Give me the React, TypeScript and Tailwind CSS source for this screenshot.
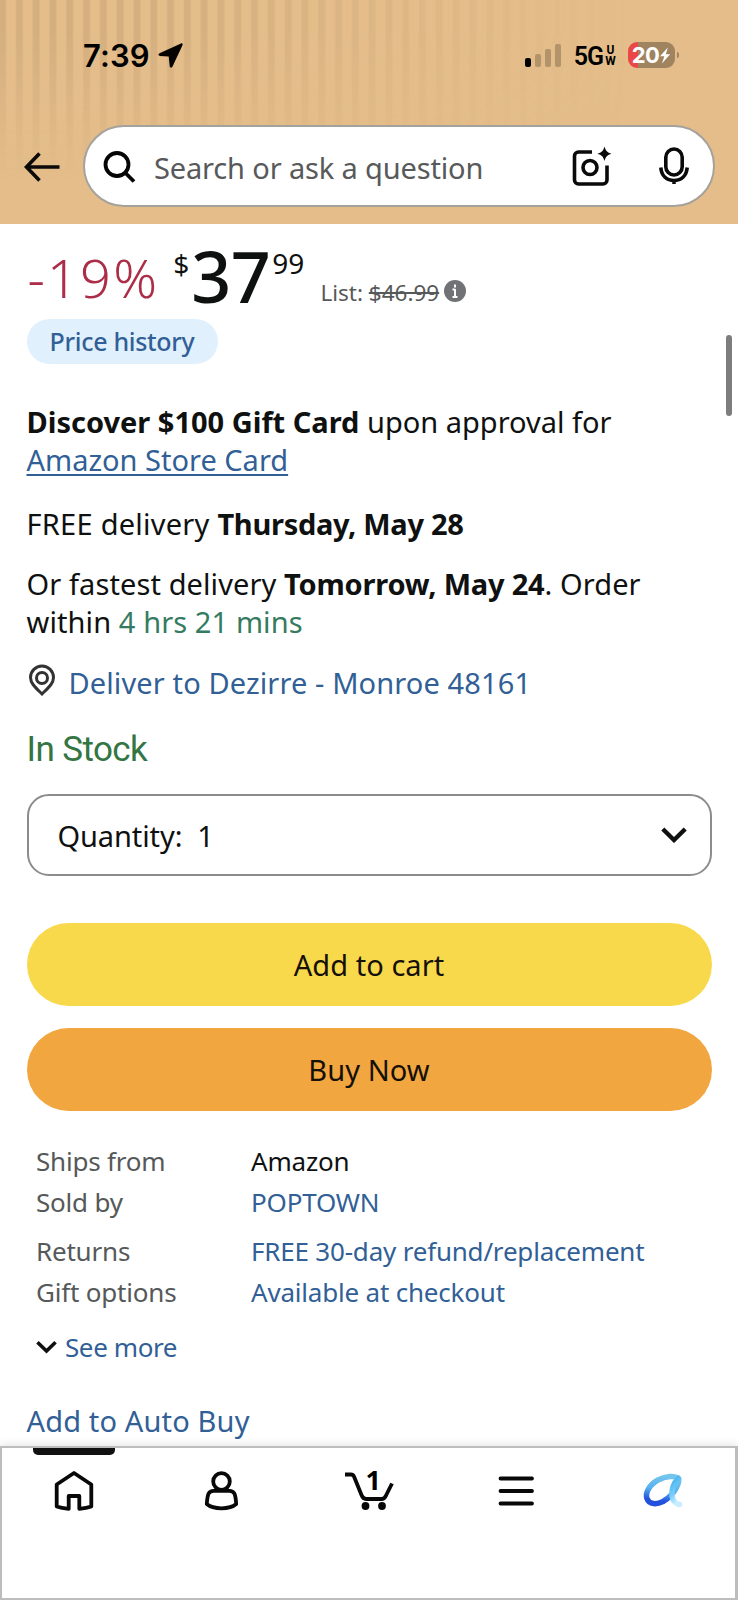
import type { ReactNode } from "react";

const details = [
  { label: "Ships from", value: "Amazon", link: false, gap: "" },
  { label: "Sold by", value: "POPTOWN", link: true, gap: "mt-[5px]" },
  { label: "Returns", value: "FREE 30-day refund/replacement", link: true, gap: "mt-[13px]" },
  { label: "Gift options", value: "Available at checkout", link: true, gap: "mt-[5px]" },
];

function StatusBar() {
  return (
    <div className="flex h-[110px] items-center pl-[83px] pr-[59px] font-['Inter',sans-serif] text-black">
      <span className="text-[31px] font-semibold leading-none tracking-[0.1px]">7:39</span>
      <svg className="ml-[8px]" width="25" height="25" viewBox="0 0 25 25">
        <path d="M23 .5 1.500 10.200C-.1 11 .2 12.700 1.800 12.900L10.700 13.500 11.700 23.300c.2 1.700 2 2 2.800.3L24.500 2.200C25 1 24.300 0 23 .5Z" fill="#050200" />
      </svg>
      <div className="ml-auto flex items-end gap-1">
        <span className="h-[9px] w-1.5 rounded-[2px] bg-black" />
        <span className="h-[13px] w-1.5 rounded-[2px] bg-[#b3936a]" />
        <span className="h-[18px] w-1.5 rounded-[2px] bg-[#b3936a]" />
        <span className="h-[23px] w-1.5 rounded-[2px] bg-[#b3936a]" />
      </div>
      <span className="ml-[13px] mt-[2px] font-['Roboto',sans-serif] text-[25px] font-semibold leading-none tracking-[-1px]">5G</span>
      <span className="ml-[2px] mt-[2px] flex w-[11px] flex-col items-center font-['Roboto',sans-serif] text-[12px] font-bold leading-[11px]">
        <span>U</span>
        <span>W</span>
      </span>
      <div className="ml-3 flex h-[26px] w-[47px] items-center justify-center rounded-[9px] bg-linear-to-r from-[#ea4747] from-[22%] to-[#a0835f] to-[22%] text-white">
        <span className="text-[22px] font-bold leading-none tracking-[-0.5px]">20</span>
        <svg width="12" height="17" viewBox="0 0 12 17">
          <path d="M8.800.5 1 9.300h4.300L3 16.500l8.200-9.300H6.900Z" fill="#fff" />
        </svg>
      </div>
      <span className="ml-[2px] h-[6px] w-[2px] rounded-r bg-[#a0835f]" />
    </div>
  );
}

function SearchBar() {
  return (
    <div className="mt-[15px] flex items-center pl-6 pr-[23px]">
      <svg className="mt-[2px]" width="36" height="30" viewBox="0 0 36 30" fill="none" stroke="#0b0a08" strokeWidth="3.600">
        <path d="M35.500 15H3M15.500 1.500 2.500 15l13 13.500" />
      </svg>
      <div className="ml-[23px] flex h-[82px] flex-1 items-center rounded-full border-2 border-[#a5a29c] bg-white pl-[17px] pr-[24px]">
        <svg className="mt-px" width="34" height="34" viewBox="0 0 34 34" fill="none" stroke="#050505" strokeWidth="3.800">
          <circle cx="15" cy="14.500" r="11.500" />
          <path d="m23 22.500 9 9" />
        </svg>
        <span className="ml-[18px] mt-[4px] text-[29px] leading-9 tracking-[-0.15px] text-[#58595a]">Search or ask a question</span>
        <svg className="ml-auto" width="40" height="42" viewBox="0 0 40 42" fill="none" stroke="#0a0a0a" strokeWidth="3.600">
          <path d="M20 7H6.500A4 4 0 0 0 2.500 11v24a4 4 0 0 0 4 4H31a4 4 0 0 0 4-4V20.500" />
          <circle cx="18" cy="22.500" r="7" />
          <path d="M32.500 1.500c1.300 4.500 2.700 5.900 7 7.300-4.300 1.400-5.700 2.800-7 7.200-1.300-4.400-2.700-5.800-7.200-7.200 4.500-1.400 5.900-2.800 7.200-7.300Z" fill="#0a0a0a" stroke="none" />
        </svg>
        <svg className="ml-[47px]" width="30" height="38" viewBox="0 0 30 38" fill="none" stroke="#0a0a0a" strokeWidth="3.600">
          <rect x="6.800" y="2" width="16.400" height="26" rx="8.200" />
          <path d="M1.800 20.500C2.500 29 8 33.500 15 33.500S27.500 29 28.200 20.500M15 33v4" />
        </svg>
      </div>
    </div>
  );
}

function PriceRow() {
  return (
    <div className="flex h-[95px] items-start text-[#0f1111]">
      <span className="ml-px mt-[17px] text-[54px] font-light leading-[72px] tracking-[2.200px] text-[#ab2d47]">-19%</span>
      <span className="ml-[14px] mt-[22px] text-[28px] leading-9">$</span>
      <span className="ml-[2px] mt-[4px] text-[70px] font-medium leading-[96px] tracking-[-0.5px]">37</span>
      <span className="ml-[2px] mt-[21px] text-[28px] leading-9">99</span>
      <span className="ml-4 mt-[53px] text-[22.500px] leading-[32px] text-[#565959]">
        List: <span className="line-through">$46.99</span>
      </span>
      <svg className="ml-[5px] mt-[56px]" width="22" height="22" viewBox="0 0 22 22">
        <circle cx="11" cy="11" r="11" fill="#717275" />
        <path d="M11 4.500v3M11 9v8M8.500 9.500H11M8.500 17h5" stroke="#fff" strokeWidth="2" />
      </svg>
    </div>
  );
}

function PillButton({ className, children }: { className: string; children: ReactNode }) {
  return (
    <button className={`flex h-[83px] w-full items-center justify-center rounded-full text-[29px] leading-none tracking-[0.050px] text-[#151008] ${className}`}>
      {children}
    </button>
  );
}

function Chevron({ width, height }: { width: number; height: number }) {
  return (
    <svg width={width} height={height} viewBox="0 0 26 16" fill="none" stroke="#0f1111" strokeWidth="4.400">
      <path d="m1.800 2 11.200 11L24.200 2" />
    </svg>
  );
}

function BottomNav() {
  return (
    <nav className="h-[154px] border-2 border-r-[3px] border-[#bdbdbf] bg-white shadow-[0_-2px_8px_rgba(0,0,0,0.1)]">
      <div className="ml-[31px] h-[7px] w-[82px] rounded-b-[5px] bg-[#111]" />
      <div className="-mr-[2px] -ml-[2px] mt-[15px] grid grid-cols-5 justify-items-center">
        <svg width="40" height="42" viewBox="0 0 40 42" fill="none" stroke="#080808" strokeWidth="3.800" strokeLinejoin="round">
          <path d="M20 3 2.700 14.500v22c4 1.500 8 2 12 2.300V26h10.600v12.800c4-.3 8-.8 12-2.300v-22Z" />
        </svg>
        <svg width="36" height="42" viewBox="0 0 36 42" fill="none" stroke="#080808" strokeWidth="3.800" strokeLinejoin="round">
          <circle cx="18.500" cy="11.500" r="8.300" />
          <path d="M10.500 20.800h16c4.500 0 6 2.500 6.700 13.200-6.500 5.700-22.900 5.700-29.400 0 .7-10.700 2.200-13.200 6.700-13.200Z" />
        </svg>
        <div className="relative h-[42px] w-[48px]">
          <svg width="50" height="42" viewBox="0 0 50 42" fill="none" stroke="#080808" strokeWidth="3.800" strokeLinejoin="round">
            <path d="M1 4.500h6c1.500 0 2.300.5 3 2l7.500 18.500c1.200 3 2 4 4.500 4h15.500c2.500 0 3.500-1 4.500-3.500L48 13.500" />
            <circle cx="21.500" cy="36" r="3.900" fill="#080808" stroke="none" />
            <circle cx="38" cy="36" r="3.900" fill="#080808" stroke="none" />
          </svg>
          <span className="absolute left-[21px] top-[-4px] text-[27px] font-bold leading-[27px] text-black">1</span>
        </div>
        <svg width="38" height="42" viewBox="0 0 38 42" stroke="#080808" strokeWidth="3.800" strokeLinecap="round">
          <path d="M3.500 8.500h31.500M3.500 21h31.500M3.500 33.500h31.500" />
        </svg>
        <svg width="42" height="42" viewBox="0 0 42 42" fill="none" strokeWidth="5.500" strokeLinecap="round" strokeLinejoin="round">
          <defs>
            <linearGradient id="loop" x1="0.600" y1="0" x2="0.400" y2="1">
              <stop offset="0" stopColor="#74c5ee" />
              <stop offset="0.500" stopColor="#58b2f0" />
              <stop offset="0.900" stopColor="#2350dd" />
            </linearGradient>
            <linearGradient id="tail" x1="0" y1="0" x2="0.300" y2="1">
              <stop offset="0" stopColor="#43b0ee" />
              <stop offset="0.600" stopColor="#7ad0fa" />
              <stop offset="1" stopColor="#c8edff" />
            </linearGradient>
          </defs>
          <path d="M36.500 8.500C33 5.500 24 5.500 16 10 7 15 3 23 5 28.500 7 35 15 34.500 21 31.500 27 28 31.500 23.500 34.500 17.500 36.500 13.500 37.500 10.500 36.500 8.500Z" stroke="url(#loop)" />
          <path d="M36.500 8.500C31.500 13 29.500 20 30 26c.5 4 3 7.500 7.500 8.500" stroke="url(#tail)" />
        </svg>
      </div>
    </nav>
  );
}

export default function App() {
  return (
    <div className="relative flex h-[1600px] w-[738px] flex-col overflow-hidden bg-white font-['Noto_Sans','Open_Sans',sans-serif] text-[#0f1111]">
      <header className="relative h-[224px] bg-[#e4bd8a]">
        <div className="absolute inset-0 bg-[repeating-linear-gradient(90deg,#d5af7f_0px,#d5af7f_5px,#e4bd8a_7px,#e4bd8a_15px,#d5af7f_16.8px)] mask-[linear-gradient(180deg,#000_15%,transparent_80%),linear-gradient(90deg,#000_20%,transparent_85%)] mask-intersect" />
        <div className="relative">
          <StatusBar />
          <SearchBar />
        </div>
      </header>

      <main className="flex-1 px-[26.5px]">
        <PriceRow />
        <button className="flex h-[45px] w-[191px] items-center justify-center rounded-full bg-[#e1f0fd] text-[25px] font-medium leading-none tracking-[-0.3px] text-[#315f96]">
          Price history
        </button>

        <p className="mt-[39px] text-[29px] leading-[38px]">
          <b>Discover $100 Gift Card</b> upon approval for
          <br />
          <a className="text-[#315f96] underline decoration-2 underline-offset-3">Amazon Store Card</a>
        </p>
        <p className="mt-[26px] text-[29px] leading-[38px] tracking-[0.25px]">
          FREE delivery <b className="tracking-[-0.3px]">Thursday, May 28</b>
        </p>
        <p className="mt-[22px] whitespace-nowrap text-[29px] leading-[38px] tracking-[0.100px]">
          Or fastest delivery <b className="tracking-[-0.200px]">Tomorrow, May 24</b>. Order
          <br />
          within <span className="text-[#357b61]">4 hrs 21 mins</span>
        </p>

        <div className="mt-[22px] flex h-[38px] items-center text-[29px] leading-[38px] tracking-[0.120px] text-[#315f96]">
          <svg className="-mt-1 ml-px mr-[13px]" width="28" height="32" viewBox="0 0 28 32" fill="none" stroke="#333" strokeWidth="3">
            <path d="M14 30C8 24 2.500 19.500 2.500 13.500a11.500 11.500 0 0 1 23 0C25.500 19.500 20 24 14 30Z" />
            <circle cx="14" cy="14" r="5.500" />
          </svg>
          <span className="mt-px">Deliver to Dezirre - Monroe 48161</span>
        </div>

        <p className="mt-[29px] font-['Roboto',sans-serif] text-[35px] leading-10 tracking-[-0.6px] text-[#347544]">In Stock</p>

        <button className="mt-6 flex h-[82px] w-full items-center justify-between rounded-[22px] border-2 border-[#8b8d8d] pl-[29px] pr-[23px] text-[29px] leading-none">
          <span className="whitespace-pre tracking-[-0.100px]">Quantity:{"  "}1</span>
          <Chevron width={26} height={16} />
        </button>

        <PillButton className="mt-[47px] bg-[#f8d94b]">Add to cart</PillButton>
        <PillButton className="mt-[22px] bg-[#f2a640]">Buy Now</PillButton>

        <div className="mt-8 pl-[9.500px] text-[26px] leading-9 tracking-[-0.200px]">
          {details.map((d) => (
            <div key={d.label} className={`flex ${d.gap}`}>
              <span className="w-[215px] text-[#565959]">{d.label}</span>
              <span className={d.link ? "text-[#315f96]" : ""}>{d.value}</span>
            </div>
          ))}
          <div className="mt-[19px] flex h-9 items-center gap-2 text-[#315f96]">
            <Chevron width={21} height={14} />
            <span className="tracking-[-0.400px]">See more</span>
          </div>
        </div>

        <a className="mt-[37px] block text-[29px] leading-[38px] tracking-[0.150px] text-[#315f96]">Add to Auto Buy</a>
      </main>

      <BottomNav />

      {/* scroll thumb */}
      <div className="absolute right-[6px] top-[335px] h-[81px] w-[6px] rounded-full bg-[#7d7d7d]" />
    </div>
  );
}
